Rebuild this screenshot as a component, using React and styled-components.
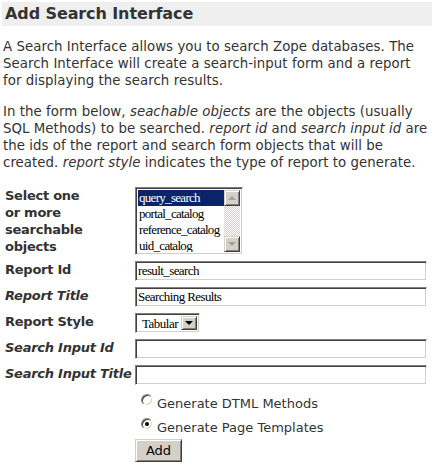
import React from 'react'
import styled, {createGlobalStyle} from 'styled-components'

const Global = createGlobalStyle`
  body {
    margin: 0;
    background: #fff;
    font-family: "DejaVu Sans", Verdana, sans-serif;
  }
`

const objects = ['query_search', 'portal_catalog', 'reference_catalog', 'uid_catalog']

function App() {
  return (
    <Page>
      <Global />
      <TitleBar>Add Search Interface</TitleBar>
      <Help>
        A Search Interface allows you to search Zope databases. The Search
        Interface will create a search-input form and a report for displaying
        the search results.
      </Help>
      <Help $gap>
        In the form below, <em>seachable objects</em> are the objects (usually
        SQL Methods) to be searched. <em>report id</em> and{' '}
        <em>search input id</em> are the ids of the report and search form
        objects that will be created. <em>report style</em> indicates the type
        of report to generate.
      </Help>

      <Form>
        <Label>Select one<br />or more<br />searchable<br />objects</Label>
        <ListBox>
          <Options>
            {objects.map((o, i) => (
              <Option key={o} $selected={i === 0}>{o}</Option>
            ))}
          </Options>
          <ScrollBar>
            <ArrowButton><Arrow $up /></ArrowButton>
            <Track />
            <ArrowButton><Arrow /></ArrowButton>
          </ScrollBar>
        </ListBox>

        <Label>Report Id</Label>
        <TextInput defaultValue="result_search" />

        <Label $optional>Report Title</Label>
        <TextInput defaultValue="Searching Results" />

        <Label>Report Style</Label>
        <Select>
          <SelectValue>Tabular</SelectValue>
          <DropButton><Arrow $dark /></DropButton>
        </Select>

        <Label $optional>Search Input Id</Label>
        <TextInput />

        <Label $optional>Search Input Title</Label>
        <TextInput />

        <Actions>
          <RadioRow>
            <Radio />
            Generate DTML Methods
          </RadioRow>
          <RadioRow>
            <Radio $checked />
            Generate Page Templates
          </RadioRow>
          <Button>Add</Button>
        </Actions>
      </Form>
    </Page>
  )
}

const Page = styled.div`
  padding: 2px 2px 0;
  color: #333333;
`

const TitleBar = styled.div`
  background: #efefef;
  height: 24px;
  line-height: 24px;
  padding: 0 3px;
  font-size: 16px;
  font-weight: bold;
  letter-spacing: -0.1px;
  color: #333333;
`

const Help = styled.p`
  margin: ${p => (p.$gap ? '14px' : '12px')} 0 0;
  padding: 0 0 0 1px;
  font-size: 13.33px;
  letter-spacing: 0.05px;
  line-height: 17px;
  color: #333333;
`

const Form = styled.div`
  display: grid;
  grid-template-columns: 130px 1fr;
  row-gap: 6px;
  align-items: start;
  margin: 16px 5px 0 3px;
`

const Label = styled.div`
  font-size: 13px;
  line-height: 17px;
  font-weight: bold;
  letter-spacing: -0.25px;
  font-style: ${p => (p.$optional ? 'italic' : 'normal')};
  color: #333333;
  white-space: nowrap;
`

const inset = `
  border-style: solid;
  border-width: 1px;
  border-color: #808080 #ffffff #ffffff #808080;
  box-shadow: inset 1px 1px 0 #404040, inset -1px -1px 0 #d4d0c8;
  background: #fff;
  box-sizing: border-box;
`

const raised = `
  box-sizing: border-box;
  background: #d4d0c8;
  border-style: solid;
  border-width: 1px;
  border-color: #d4d0c8 #404040 #404040 #d4d0c8;
  box-shadow: inset 1px 1px 0 #ffffff, inset -1px -1px 0 #808080;
`

const ListBox = styled.div`
  ${inset}
  width: 108px;
  height: 68px;
  padding: 2px;
  display: flex;
`

const Options = styled.div`
  flex: 1;
  overflow: hidden;
`

const Option = styled.div`
  height: 16px;
  line-height: 16px;
  padding-left: 1px;
  font-family: "Liberation Serif", "Times New Roman", serif;
  font-size: 13px;
  letter-spacing: -0.7px;
  white-space: nowrap;
  color: ${p => (p.$selected ? '#fff' : '#000')};
  background: ${p => (p.$selected ? '#0a246a' : 'transparent')};
`

const ScrollBar = styled.div`
  width: 16px;
  display: flex;
  flex-direction: column;
`

const ArrowButton = styled.div`
  ${raised}
  height: 16px;
  display: flex;
  align-items: center;
  justify-content: center;
`

const Track = styled.div`
  flex: 1;
  background: repeating-conic-gradient(#d4d0c8 0 25%, #ffffff 0 50%) 0 0 / 2px 2px;
`

const Arrow = styled.span`
  width: 0;
  height: 0;
  border-left: 4px solid transparent;
  border-right: 4px solid transparent;
  ${p => (p.$up ? 'border-bottom' : 'border-top')}: 4px solid ${p => (p.$dark ? '#000' : '#a0a0a0')};
`

const TextInput = styled.input`
  ${inset}
  width: 100%;
  height: 20px;
  padding: 0 2px;
  font-family: "Liberation Serif", "Times New Roman", serif;
  font-size: 13px;
  letter-spacing: -0.6px;
  color: #000;
  outline: none;
`

const Select = styled.div`
  ${inset}
  width: 65px;
  height: 20px;
  padding: 2px;
  display: flex;
  align-items: stretch;
`

const SelectValue = styled.div`
  flex: 1;
  padding-left: 4px;
  line-height: 16px;
  font-family: "Liberation Serif", "Times New Roman", serif;
  font-size: 13px;
  letter-spacing: -0.5px;
  color: #000;
`

const DropButton = styled.div`
  ${raised}
  width: 16px;
  display: flex;
  align-items: center;
  justify-content: center;
`

const Actions = styled.div`
  grid-column: 2;
  display: flex;
  flex-direction: column;
  align-items: flex-start;
`

const RadioRow = styled.label`
  display: flex;
  align-items: center;
  gap: 4px;
  height: 24px;
  padding-left: 6px;
  font-size: 13px;
  color: #333333;
`

const Radio = styled.span`
  width: 12px;
  height: 12px;
  box-sizing: border-box;
  border-radius: 50%;
  border: 1px solid;
  border-color: #808080 #ffffff #ffffff #808080;
  box-shadow: inset 1px 1px 0 #404040, inset -1px -1px 0 #d4d0c8;
  background: #fff;
  display: flex;
  align-items: center;
  justify-content: center;
  margin-top: -6px;
  &::after {
    content: '';
    width: 4px;
    height: 4px;
    border-radius: 50%;
    background: ${p => (p.$checked ? '#000' : 'transparent')};
  }
`

const Button = styled.button`
  ${raised}
  width: 47px;
  height: 23px;
  padding: 0;
  font-family: "DejaVu Sans", Verdana, sans-serif;
  font-size: 13px;
  color: #000;
`

export default App
